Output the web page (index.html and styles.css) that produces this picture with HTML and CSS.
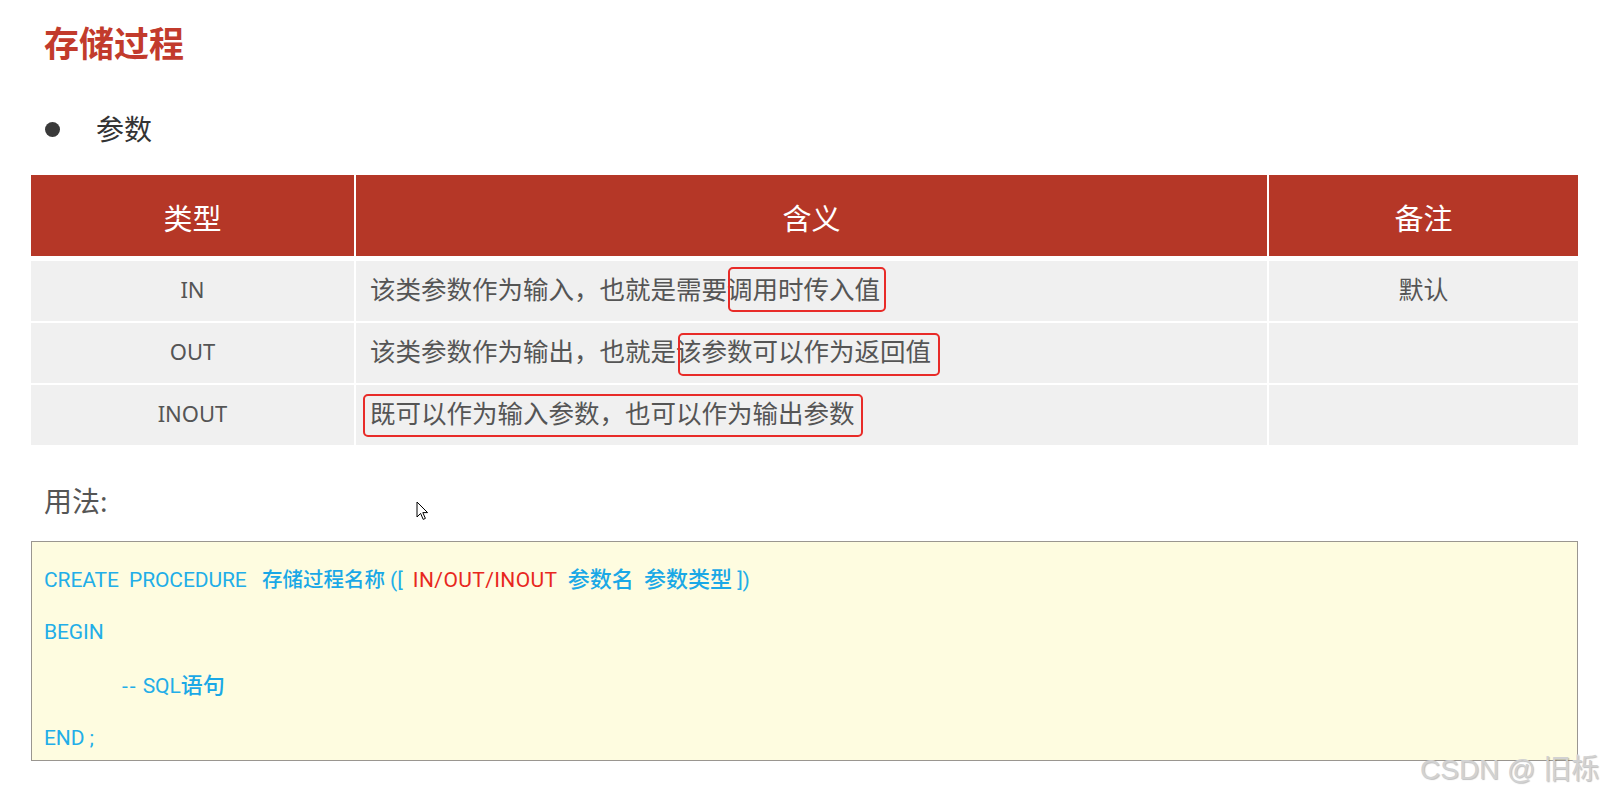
FILE: index.html
```html
<!DOCTYPE html>
<html lang="zh-CN">
<head>
    <meta charset="UTF-8">
    <meta name="viewport" content="width=device-width, initial-scale=1.0">
    <title>存储过程</title>
    <link rel="stylesheet" href="styles.css">
</head>
<body>
    <!-- Slide title -->
    <h1 class="title">存储过程</h1>

    <ul class="points">
        <li>参数</li>
    </ul>

    <!-- Parameter table -->
    <div class="param-table">
        <div class="cell head">类型</div>
        <div class="cell head">含义</div>
        <div class="cell head">备注</div>

        <div class="cell type">IN</div>
        <div class="cell desc">该类参数作为输入，也就是需要<span class="mark mark-in">调用时传入值</span></div>
        <div class="cell note">默认</div>

        <div class="cell type">OUT</div>
        <div class="cell desc">该类参数作为输出，也就是<span class="mark mark-out">该参数可以作为返回值</span></div>
        <div class="cell note"></div>

        <div class="cell type">INOUT</div>
        <div class="cell desc"><span class="mark mark-inout">既可以作为输入参数，也可以作为输出参数</span></div>
        <div class="cell note"></div>
    </div>

    <p class="usage">用法:</p>

    <!-- Syntax box -->
    <div class="code">
        <div class="line">CREATE  PROCEDURE   <span class="zh name">存储过程名称</span> ([  <span class="red">IN/OUT/INOUT</span>  <span class="zh">参数名</span>  <span class="zh">参数类型</span> ])</div>
        <div class="line">BEGIN</div>
        <div class="line indent"><span class="dash">--</span> SQL<span class="zh">语句</span></div>
        <div class="line">END ;</div>
    </div>

    <div class="watermark">CSDN @ 旧栎</div>

    <svg class="cursor" width="13" height="20" viewBox="0 0 13 20">
        <path d="M1 1 L1 16 L4.6 12.4 L7.2 18.4 L9.4 17.4 L6.8 11.6 L11.6 11.6 Z" fill="#fff" stroke="#000" stroke-width="1" stroke-linejoin="round"/>
    </svg>
</body>
</html>
```

FILE: styles.css
```css
/* Reset */
* {
    margin: 0;
    padding: 0;
    box-sizing: border-box;
}
body {
    font-family: "Noto Sans", "Noto Sans CJK SC", sans-serif;
    color: #333;
    background: #fff;
    width: 1616px;
    height: 802px;
    overflow: hidden;
    position: relative;
}
/* Title */
.title {
    font-size: 35px;
    font-weight: 700;
    color: #c23b2c;
    line-height: 50px;
    padding: 19px 0 0 44px;
}
/* Bullet list */
.points {
    list-style: none;
    margin-top: 40px;
}
.points li {
    display: flex;
    align-items: center;
    font-size: 28px;
    line-height: 40px;
    color: #333;
}
.points li::before {
    content: "";
    width: 15px;
    height: 15px;
    border-radius: 50%;
    background: #3a3a3a;
    margin: 0 36px 0 45px;
}
/* Parameter table */
.param-table {
    display: grid;
    grid-template-columns: 323px 911px 309px;
    grid-template-rows: 84px repeat(3, 60px);
    gap: 2px;
    margin: 26px 0 0 31px;
}
.cell {
    display: flex;
    align-items: center;
    background: #f0f0f0;
    color: #555;
    font-size: 25.5px;
    line-height: 36px;
    padding-bottom: 4px;
}
.cell.head {
    background: #b53727;
    color: #fff;
    font-size: 29px;
    line-height: 40px;
    justify-content: center;
    margin-bottom: 3px;
    padding: 6px 0 0;
}
.cell.type {
    justify-content: center;
    font-size: 22px;
}
.cell.desc {
    padding-left: 14px;
}
.cell.note {
    justify-content: center;
    font-size: 25px;
}
/* Hand-drawn highlight boxes */
.mark {
    position: relative;
}
.mark::after {
    content: "";
    position: absolute;
    border: 2px solid #e82b28;
    border-radius: 5px;
}
.mark-in::after {
    top: -4px;
    bottom: -5px;
    left: 1px;
    right: -6px;
}
.mark-out::after {
    top: 0;
    bottom: -7px;
    left: 2px;
    right: -9px;
}
.mark-inout::after {
    top: -1px;
    bottom: -6px;
    left: -7px;
    right: -8px;
}
/* Usage */
.usage {
    margin: 36px 0 0 44px;
    font-size: 28px;
    line-height: 40px;
    color: #555;
}
.code {
    margin: 20px 0 0 31px;
    width: 1547px;
    height: 220px;
    border: 1px solid #9a9690;
    background: #fefce0;
    padding: 10px 0 0 12px;
    font-family: Roboto, "Noto Sans CJK SC", sans-serif;
    font-size: 21px;
    letter-spacing: -0.1px;
    color: #22aee8;
}
.code .line {
    white-space: pre;
    line-height: 51.5px;
}
.code .indent {
    padding-left: 78px;
}
.code .dash {
    letter-spacing: 2px;
}
.code .zh {
    font-family: "Noto Sans CJK SC", sans-serif;
    font-size: 22px;
    font-weight: 500;
    letter-spacing: 0;
    color: #1aa8e6;
}
.code .zh.name {
    font-size: 20.5px;
}
.code .red {
    color: #e8281e;
    letter-spacing: 0.4px;
}
/* Overlays */
.watermark {
    position: absolute;
    left: 1420px;
    top: 755px;
    font-family: "Liberation Sans", "Noto Sans CJK SC", sans-serif;
    font-size: 28px;
    line-height: 30px;
    color: #d2d2d2;
    text-shadow: 1px 1px 1px rgba(0, 0, 0, 0.25);
    white-space: nowrap;
}
.cursor {
    position: absolute;
    left: 416px;
    top: 501px;
}
```
